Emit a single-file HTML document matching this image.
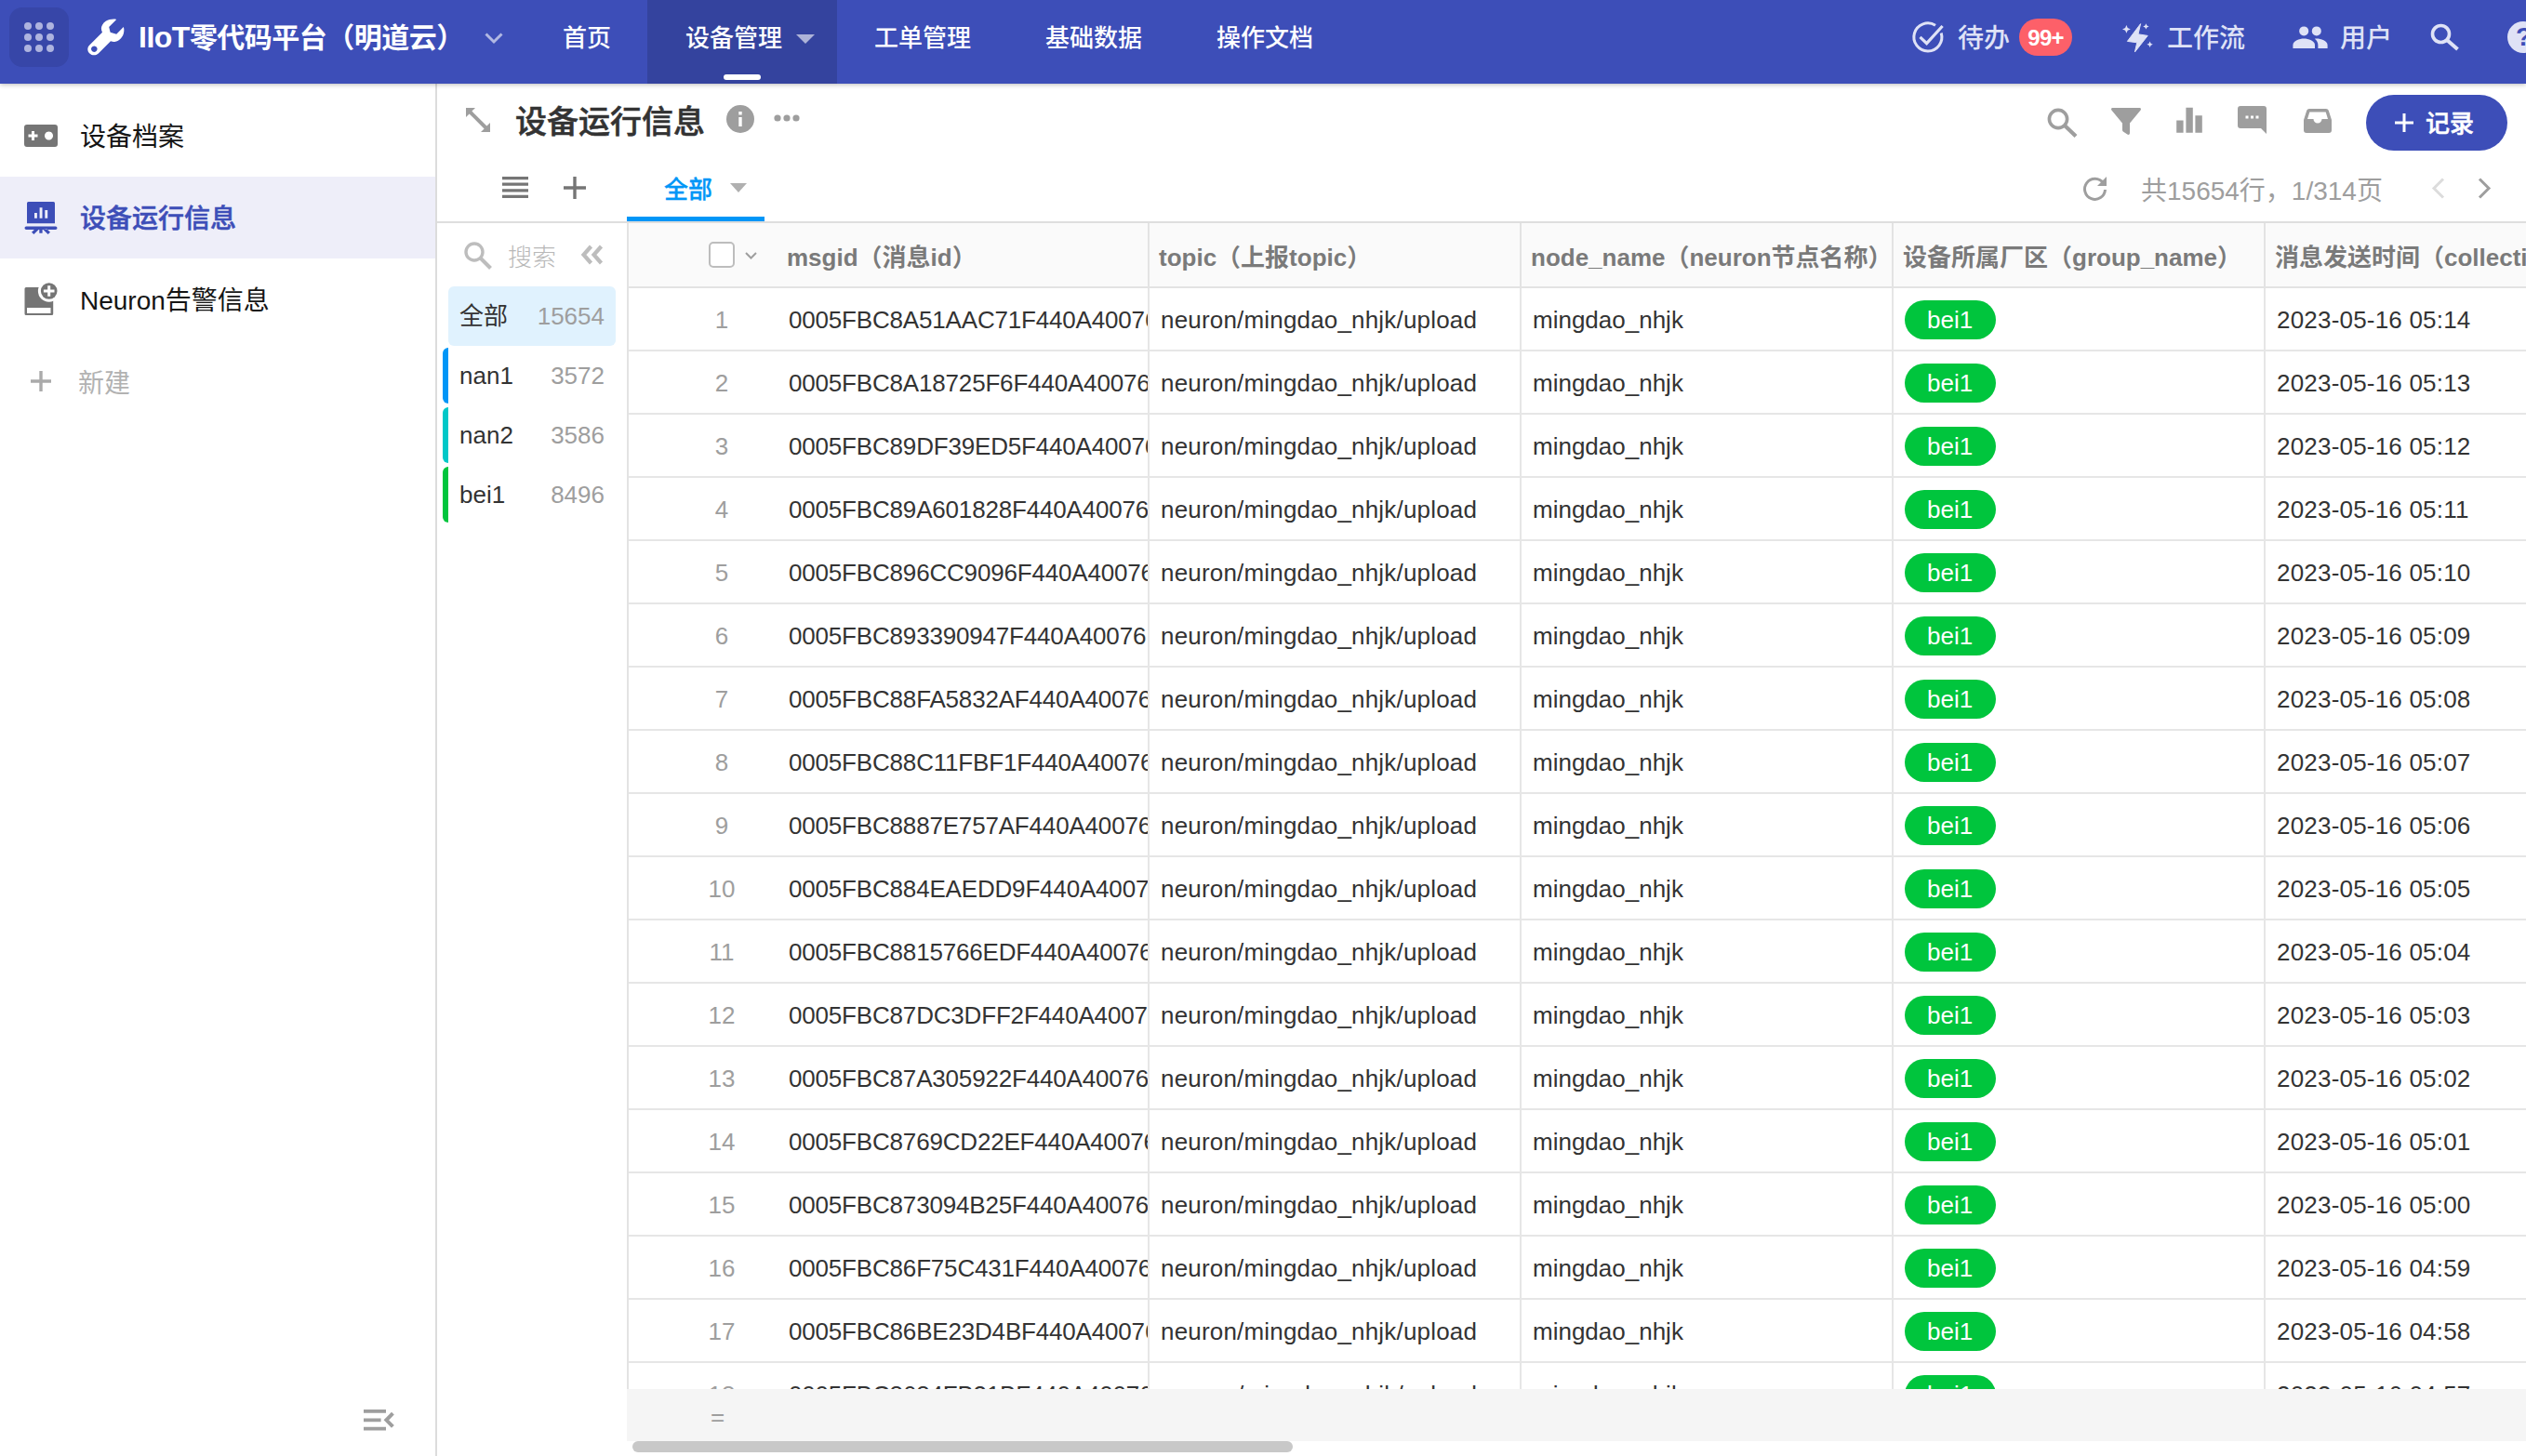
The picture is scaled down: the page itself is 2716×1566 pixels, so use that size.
<!DOCTYPE html>
<html lang="zh-CN"><head><meta charset="utf-8"><title>设备运行信息</title>
<style>
*{box-sizing:border-box;margin:0;padding:0}
html,body{width:2716px;height:1566px;overflow:hidden;background:#fff}
body{position:relative;font-family:"Liberation Sans","Noto Sans CJK SC",sans-serif;font-size:26px;color:#333;line-height:1}
.abs{position:absolute}
svg{position:absolute;display:block;overflow:visible}
/* top bar */
.topbar{position:absolute;left:0;top:0;width:2716px;height:90px;background:#3d4eb8;box-shadow:0 1px 5px rgba(0,0,0,.28);z-index:5}
.appbtn{position:absolute;left:10px;top:8px;width:64px;height:64px;border-radius:14px;background:#3746a8}
.appbtn i{position:absolute;width:8px;height:8px;border-radius:50%;background:#aeb4df}
.apptitle{position:absolute;left:149px;top:20px;height:40px;line-height:40px;font-size:30px;font-weight:700;color:#fff;white-space:nowrap;letter-spacing:-.5px}
.nav{position:absolute;top:0;height:90px;line-height:82px;font-size:26px;font-weight:500;color:#fff;white-space:nowrap}
.navact{position:absolute;left:696px;top:0;width:204px;height:90px;background:#34439e}
.navind{position:absolute;left:778px;top:80px;width:40px;height:6px;border-radius:3px;background:#fff}
.tr-tri{position:absolute;width:0;height:0;border-left:10px solid transparent;border-right:10px solid transparent;border-top:10px solid rgba(255,255,255,.6)}
.rnav{position:absolute;top:22px;height:40px;line-height:40px;font-size:28px;font-weight:500;color:#dfe2f6;white-space:nowrap}
.badge{position:absolute;left:2171px;top:20px;width:57px;height:40px;border-radius:20px;background:#fd6069;color:#fff;font-size:24px;font-weight:700;line-height:42px;text-align:center;letter-spacing:-.8px}
/* sidebar */
.sidebar{position:absolute;left:0;top:90px;width:470px;height:1476px;background:#fff;border-right:2px solid #dcdcdc}
.sitem{position:absolute;left:0;width:468px;height:88px;line-height:92px;font-size:28px;color:#151515;padding-left:86px;white-space:nowrap}
.sitem.act{background:#eeeef9;color:#3d4eb8;font-weight:500;-webkit-text-stroke:.5px #3d4eb8}
.snew{position:absolute;left:84px;top:276px;height:88px;line-height:94px;font-size:28px;color:#b2b2b2}
/* content header */
.ptitle{position:absolute;left:554px;top:105px;height:52px;line-height:52px;font-size:34px;font-weight:500;-webkit-text-stroke:.55px #333;color:#333;white-space:nowrap}
.addbtn{position:absolute;left:2544px;top:102px;width:152px;height:60px;border-radius:30px;background:#3d4eb8;color:#fff;font-size:26px;font-weight:500;-webkit-text-stroke:.5px #fff;line-height:60px;white-space:nowrap}
.addbtn span{position:absolute;left:64px;top:1px}
.tabtxt{position:absolute;left:714px;top:184px;height:40px;line-height:40px;font-size:26px;font-weight:500;-webkit-text-stroke:.3px #0096f7;color:#0096f7;white-space:nowrap}
.tabline{position:absolute;left:674px;top:233px;width:148px;height:5px;background:#0096f7;z-index:2}
.hline{position:absolute;left:470px;top:238px;width:2246px;height:2px;background:#dedede}
.pager{position:absolute;left:2302px;top:186px;height:40px;line-height:40px;font-size:28px;color:#9e9e9e;white-space:nowrap}
/* filter panel */
.fsearch{position:absolute;left:546px;top:257px;height:40px;line-height:40px;font-size:26px;font-weight:300;color:#b8b8b8}
.fitem{position:absolute;left:482px;width:180px;height:64px;line-height:64px;font-size:26px;color:#333;white-space:nowrap}
.fitem b{font-weight:400;position:absolute;left:12px}
.fitem em{font-style:normal;position:absolute;right:12px;color:#9e9e9e}
.fitem.act{background:#e0f2fe;border-radius:6px}
.fbar{position:absolute;left:476px;width:6px;height:60px;border-radius:6px 0 0 6px}
/* table */
.thead{position:absolute;left:674px;top:240px;width:2042px;height:70px;background:#fafafa;border-bottom:2px solid #e3e3e3;border-left:2px solid #e3e3e3}
.th{position:absolute;top:0;height:68px;line-height:74px;font-size:26px;font-weight:700;color:#7a7a7a;white-space:nowrap;overflow:hidden;border-right:2px solid #e3e3e3;padding-left:10px}
.tbody{position:absolute;left:674px;top:310px;width:2042px;height:1184px;overflow:hidden;border-left:2px solid #e3e3e3}
.tr{position:absolute;left:0;width:2040px;height:68px;border-bottom:2px solid #e6e6e6}
.c{position:absolute;top:0;height:66px;line-height:68px;font-size:26px;color:#333;white-space:nowrap;overflow:hidden;border-right:2px solid #e6e6e6;padding-left:12px}
.c0{left:0;width:560px;padding-left:0}
.c1{left:560px;width:400px;letter-spacing:.18px}
.c2{left:960px;width:400px}
.c3{left:1360px;width:400px}
.c4{left:1760px;width:400px;border-right:0;letter-spacing:.2px}
.no{position:absolute;left:60px;width:80px;text-align:center;color:#9e9e9e}
.mid{position:absolute;left:172px;letter-spacing:-.18px}
.tag{display:inline-block;height:42px;line-height:42px;border-radius:21px;background:#00c53d;color:#fff;padding:0 25px 0 24px;margin-top:13px;vertical-align:top;font-size:26px}
.tfoot{position:absolute;left:674px;top:1494px;width:2042px;height:56px;background:#f5f5f5}
.eq{position:absolute;left:90px;top:17px;font-size:26px;color:#9e9e9e;line-height:26px}
.hscroll{position:absolute;left:674px;top:1550px;width:2042px;height:16px;background:#fff}
.thumb{position:absolute;left:6px;top:0px;width:710px;height:12px;border-radius:6px;background:#c8c8c8}

</style></head><body>
<div class="topbar">
<div class="appbtn"><i style="left:16px;top:16px"></i><i style="left:28px;top:16px"></i><i style="left:40px;top:16px"></i><i style="left:16px;top:28px"></i><i style="left:28px;top:28px"></i><i style="left:40px;top:28px"></i><i style="left:16px;top:40px"></i><i style="left:28px;top:40px"></i><i style="left:40px;top:40px"></i></div>
<svg style="left:94px;top:20px" width="40" height="40" viewBox="0 0 40 40"><path d="M31.2 0.9 C28 0.2 23 0.8 19.7 2.8 C16.5 5 14.9 8.5 14.9 10.6 C14.9 12.2 15.3 13.6 16 14.7 L2 28.7 C-0.3 31 -0.3 35 2.4 37.4 C5 40 9 40 11.8 37.4 L25 24.2 C26.3 24.8 27.8 25.1 29.2 25 C31.5 24.9 36 22.5 38.2 18 C39.5 15 39.8 11.5 38.8 9 L31.2 16.8 L24.6 14.7 L23.2 9 Z M7.3 29.4 a3.3 3.3 0 1 0 0.01 0Z" fill="#fff" fill-rule="evenodd"/></svg>
<div class="apptitle"><span style="font-size:32px">IIoT</span>零代码平台（明道云）</div>
<svg style="left:521px;top:35px" width="20" height="12" viewBox="0 0 20 12"><path d="M1.5 1.5 L10 10 L18.5 1.5" fill="none" stroke="rgba(255,255,255,.6)" stroke-width="3"/></svg>
<div class="nav" style="left:605px">首页</div>
<div class="navact"></div>
<div class="nav" style="left:737px">设备管理</div>
<div class="tr-tri" style="left:856px;top:37px"></div>
<div class="navind"></div>
<div class="nav" style="left:940px">工单管理</div>
<div class="nav" style="left:1124px">基础数据</div>
<div class="nav" style="left:1308px">操作文档</div>
<svg style="left:2055px;top:22px" width="36" height="36" viewBox="0 0 36 36"><path d="M32.2 13.5 A15 15 0 1 1 26 5.3" fill="none" stroke="#dfe2f6" stroke-width="3"/><path d="M9.5 17.8 L16.6 24.6 L33.6 6" fill="none" stroke="#dfe2f6" stroke-width="3.2"/></svg>
<div class="rnav" style="left:2105px">待办</div>
<div class="badge">99+</div>
<svg style="left:2282px;top:23px" width="34" height="34" viewBox="0 0 34 34"><path d="M19.6 2.6 L5.4 21.4 L15.8 22.8 L13.4 33 L27.2 15.4 L17 13.8 Z" fill="#dfe2f6" stroke="#dfe2f6" stroke-width="1" stroke-linejoin="round"/><path d="M4.4 4 l1.3 3.1 3.1 1.3 -3.1 1.3 -1.3 3.1 -1.3 -3.1 -3.1 -1.3 3.1 -1.3z M25.4 2.2 l1 2.2 2.2 1 -2.2 1 -1 2.2 -1 -2.2 -2.2 -1 2.2 -1z M29.6 21.6 l1 2.2 2.2 1 -2.2 1 -1 2.2 -1 -2.2 -2.2 -1 2.2 -1z" fill="#dfe2f6"/></svg>
<div class="rnav" style="left:2330px">工作流</div>
<svg style="left:2465px;top:28px" width="38" height="24" viewBox="0 0 38 24"><circle cx="12.2" cy="5.4" r="5" fill="#dfe2f6"/><circle cx="25.8" cy="5.4" r="5" fill="#dfe2f6"/><path d="M0.4 24 V20.5 C0.4 16 7.5 13.6 12.2 13.6 C16.9 13.6 24 16 24 20.5 V24 Z" fill="#dfe2f6"/><path d="M25.8 13.6 C25.2 13.6 24.5 13.65 23.8 13.75 C26 15.4 27.4 17.6 27.4 20.5 V24 H37.6 V20.5 C37.6 16 30.5 13.6 25.8 13.6Z" fill="#dfe2f6"/></svg>
<div class="rnav" style="left:2516px">用户</div>
<svg style="left:2613px;top:25px" width="32" height="30" viewBox="0 0 32 30"><circle cx="11.5" cy="11.5" r="9" fill="none" stroke="#dfe2f6" stroke-width="3.6"/><path d="M18 18 L29.5 28" stroke="#dfe2f6" stroke-width="4" fill="none"/></svg>
<div class="abs" style="left:2696px;top:23px;width:34px;height:34px;border-radius:50%;background:#dfe2f6;color:#3d4eb8;font-size:28px;font-weight:700;line-height:34px;padding-left:9px">?</div>
</div>

<div class="sidebar">
<div class="sitem" style="top:12px">设备档案</div>
<div class="sitem act" style="top:100px">设备运行信息</div>
<div class="sitem" style="top:188px">Neuron告警信息</div>
<div class="snew">新建</div>
<svg style="left:26px;top:44px" width="36" height="24" viewBox="0 0 36 24"><path d="M3 0 H33 a3 3 0 0 1 3 3 V21 a3 3 0 0 1 -3 3 H3 a3 3 0 0 1 -3 -3 V3 a3 3 0 0 1 3 -3Z M8 7 V10.5 H4.5 V13.5 H8 V17 H11 V13.5 H14.5 V10.5 H11 V7Z M26.5 7.5 a4.5 4.5 0 1 0 .01 0Z" fill="#757575" fill-rule="evenodd"/></svg>
<svg style="left:26px;top:127px" width="36" height="35" viewBox="0 0 36 35"><path d="M4.5 0 H31.5 a1.5 1.5 0 0 1 1.5 1.5 V23.2 H3 V1.5 a1.5 1.5 0 0 1 1.5 -1.5Z M11 12 V17.8 H13.9 V12Z M16.6 6.2 V17.8 H19.5 V6.2Z M22.3 9 V17.8 H25.2 V9Z" fill="#3d4eb8" fill-rule="evenodd"/><path d="M2.2 26.5 H33.8 a1.7 1.7 0 0 1 0 3.4 H2.2 a1.7 1.7 0 0 1 0 -3.4Z M16.3 29 H19.6 V33.8 H16.3Z M11.5 29.5 L15.5 29.9 L10.4 35 L8 32.8Z M24.5 29.5 L20.5 29.9 L25.6 35 L28 32.8Z" fill="#3d4eb8"/></svg>
<svg style="left:26px;top:214px" width="36" height="36" viewBox="0 0 36 36"><path d="M2 5 H31.2 V33.5 a1.5 1.5 0 0 1 -1.5 1.5 H2 a1.5 1.5 0 0 1 -1.5 -1.5 V6.5 a1.5 1.5 0 0 1 1.5 -1.5Z M3 27 V33 H28.5 V27Z" fill="#757575" fill-rule="evenodd"/><circle cx="26.7" cy="9" r="11.8" fill="#fff"/><circle cx="26.7" cy="9" r="8.8" fill="#757575"/><path d="M26.7 3.2 V14.8 M20.9 9 H32.5" stroke="#fff" stroke-width="3" fill="none"/></svg>
<svg style="left:32px;top:308px" width="24" height="24" viewBox="0 0 24 24"><path d="M12 1 V23 M1 12 H23" stroke="#aaa" stroke-width="3.4" fill="none"/></svg>
<svg style="left:391px;top:1426px" width="34" height="23" viewBox="0 0 34 23"><path d="M0 1.9 H24 M0 11.3 H18.6 M0 20.7 H24" stroke="#9e9e9e" stroke-width="3.7" fill="none"/><path d="M31.4 4.2 L24.4 11.3 L31.4 18.4" stroke="#9e9e9e" stroke-width="4" fill="none"/></svg>
</div>

<svg style="left:501px;top:116px" width="26" height="26" viewBox="0 0 26 26"><path d="M0 0 H10 L6.4 3.6 L22.4 19.6 L26 16 V26 H16 L19.6 22.4 L3.6 6.4 L0 10Z" fill="#9e9e9e"/></svg>
<div class="ptitle">设备运行信息</div>
<div class="abs" style="left:781px;top:113px;width:30px;height:30px;border-radius:50%;background:#9e9e9e"></div>
<svg style="left:781px;top:113px" width="30" height="30" viewBox="0 0 30 30"><path d="M13.3 7 H16.7 V10.4 H13.3Z M13.3 13 H16.7 V23 H13.3Z" fill="#fff"/></svg>
<svg style="left:832px;top:123px" width="28" height="8" viewBox="0 0 28 8"><circle cx="4" cy="4" r="3.6" fill="#9e9e9e"/><circle cx="14" cy="4" r="3.6" fill="#9e9e9e"/><circle cx="24" cy="4" r="3.6" fill="#9e9e9e"/></svg>
<svg style="left:2201px;top:116px" width="33" height="32" viewBox="0 0 33 32"><circle cx="12" cy="12" r="9.6" fill="none" stroke="#9e9e9e" stroke-width="3.6"/><path d="M19 19 L31 30.5" stroke="#9e9e9e" stroke-width="4.2" fill="none"/></svg>
<svg style="left:2270px;top:116px" width="32" height="29" viewBox="0 0 32 29"><path d="M1.5 0 H30.5 C31.8 0 32.4 1.4 31.6 2.4 L20 16.5 V27 C20 28.6 18.6 29.4 17.4 28.6 L12.8 25.4 C12.3 25 12 24.4 12 23.8 V16.5 L0.4 2.4 C-0.4 1.4 0.2 0 1.5 0Z" fill="#9e9e9e"/></svg>
<svg style="left:2340px;top:115px" width="28" height="28" viewBox="0 0 28 28"><path d="M0.2 14.4 H7.6 V27.7 H0.2Z M10.4 0.8 H17.8 V27.7 H10.4Z M20.4 9.3 H27.8 V27.7 H20.4Z" fill="#9e9e9e"/></svg>
<svg style="left:2406px;top:114px" width="31" height="30" viewBox="0 0 31 30"><path d="M3 0 H28 a3 3 0 0 1 3 3 V30 L25 24 H3 a3 3 0 0 1 -3 -3 V3 a3 3 0 0 1 3 -3Z M8.5 10.5 h3 v3 h-3Z M14 10.5 h3 v3 h-3Z M19.5 10.5 h3 v3 h-3Z" fill="#9e9e9e" fill-rule="evenodd"/></svg>
<svg style="left:2477px;top:117px" width="30" height="26" viewBox="0 0 30 26"><path d="M6 0 H24 C25.3 0 26.4 .8 26.8 2 L30 12 V23 a3 3 0 0 1 -3 3 H3 a3 3 0 0 1 -3 -3 V12 L3.2 2 C3.6 .8 4.7 0 6 0Z M6.3 3.5 L4 11 H10.5 a4.5 4.5 0 0 0 9 0 H26 L23.7 3.5Z" fill="#9e9e9e" fill-rule="evenodd"/></svg>
<div class="addbtn"><svg style="left:31px;top:20px" width="20" height="20" viewBox="0 0 20 20"><path d="M10 0 V20 M0 10 H20" stroke="#fff" stroke-width="3" fill="none"/></svg><span>记录</span></div>
<svg style="left:540px;top:190px" width="28" height="23" viewBox="0 0 28 23"><path d="M0 1.6 H28 M0 8.2 H28 M0 14.8 H28 M0 21.4 H28" stroke="#757575" stroke-width="3.2" fill="none"/></svg>
<svg style="left:606px;top:190px" width="24" height="24" viewBox="0 0 24 24"><path d="M12 0 V24 M0 12 H24" stroke="#757575" stroke-width="3.4" fill="none"/></svg>
<div class="tabtxt">全部</div>
<div class="abs" style="left:785px;top:197px;width:0;height:0;border-left:9px solid transparent;border-right:9px solid transparent;border-top:10px solid #b0b0b0"></div>
<div class="tabline"></div>
<div class="hline"></div>
<svg style="left:2239px;top:189px" width="27" height="27" viewBox="0 0 27 27"><path d="M22.5 8 A11 11 0 1 0 24.5 15" fill="none" stroke="#9e9e9e" stroke-width="3"/><path d="M26 1 V11 H16Z" fill="#9e9e9e"/></svg>
<div class="pager">共15654行，1/314页</div>
<svg style="left:2614px;top:191px" width="15" height="23" viewBox="0 0 15 23"><path d="M13 1.5 L3 11.5 L13 21.5" fill="none" stroke="#dcdcdc" stroke-width="3"/></svg>
<svg style="left:2664px;top:191px" width="15" height="23" viewBox="0 0 15 23"><path d="M2 1.5 L12 11.5 L2 21.5" fill="none" stroke="#9e9e9e" stroke-width="3"/></svg>
<svg style="left:499px;top:260px" width="30" height="30" viewBox="0 0 30 30"><circle cx="11" cy="11" r="9" fill="none" stroke="#bdbdbd" stroke-width="3.4"/><path d="M17.5 17.5 L28.5 28.5" stroke="#bdbdbd" stroke-width="4" fill="none"/></svg>
<div class="fsearch">搜索</div>
<svg style="left:625px;top:264px" width="24" height="20" viewBox="0 0 24 20"><path d="M10.5 1 L2.5 10 L10.5 19 M21.5 1 L13.5 10 L21.5 19" fill="none" stroke="#bdbdbd" stroke-width="4.2"/></svg>
<div class="fitem act" style="top:308px"><b>全部</b><em>15654</em></div>
<div class="fitem" style="top:372px"><b>nan1</b><em>3572</em></div>
<div class="fitem" style="top:436px"><b>nan2</b><em>3586</em></div>
<div class="fitem" style="top:500px"><b>bei1</b><em>8496</em></div>
<div class="fbar" style="top:374px;background:#0096f7"></div>
<div class="fbar" style="top:438px;background:#00c8c8"></div>
<div class="fbar" style="top:502px;background:#00c53d"></div>
<div class="thead">
<div class="th" style="left:0;width:560px;padding-left:170px">msgid（消息id）</div>
<div class="th" style="left:560px;width:400px">topic（上报topic）</div>
<div class="th" style="left:960px;width:400px">node_name（neuron节点名称）</div>
<div class="th" style="left:1360px;width:400px">设备所属厂区（group_name）</div>
<div class="th" style="left:1760px;width:400px;border-right:0">消息发送时间（collection_time）</div>
<div class="abs" style="left:86px;top:20px;width:28px;height:28px;border:2px solid #bdbdbd;border-radius:5px;background:#fff"></div>
<svg style="left:125px;top:31px" width="13" height="8" viewBox="0 0 13 8"><path d="M1 1 L6.5 6.5 L12 1" fill="none" stroke="#9e9e9e" stroke-width="2"/></svg>
</div>

<div class="tbody"><div class="tr" style="top:0px"><div class="c c0"><span class="no">1</span><span class="mid">0005FBC8A51AAC71F440A40076</span></div><div class="c c1">neuron/mingdao_nhjk/upload</div><div class="c c2">mingdao_nhjk</div><div class="c c3"><span class="tag">bei1</span></div><div class="c c4">2023-05-16 05:14</div></div>
<div class="tr" style="top:68px"><div class="c c0"><span class="no">2</span><span class="mid">0005FBC8A18725F6F440A40076</span></div><div class="c c1">neuron/mingdao_nhjk/upload</div><div class="c c2">mingdao_nhjk</div><div class="c c3"><span class="tag">bei1</span></div><div class="c c4">2023-05-16 05:13</div></div>
<div class="tr" style="top:136px"><div class="c c0"><span class="no">3</span><span class="mid">0005FBC89DF39ED5F440A40076</span></div><div class="c c1">neuron/mingdao_nhjk/upload</div><div class="c c2">mingdao_nhjk</div><div class="c c3"><span class="tag">bei1</span></div><div class="c c4">2023-05-16 05:12</div></div>
<div class="tr" style="top:204px"><div class="c c0"><span class="no">4</span><span class="mid">0005FBC89A601828F440A40076</span></div><div class="c c1">neuron/mingdao_nhjk/upload</div><div class="c c2">mingdao_nhjk</div><div class="c c3"><span class="tag">bei1</span></div><div class="c c4">2023-05-16 05:11</div></div>
<div class="tr" style="top:272px"><div class="c c0"><span class="no">5</span><span class="mid">0005FBC896CC9096F440A40076</span></div><div class="c c1">neuron/mingdao_nhjk/upload</div><div class="c c2">mingdao_nhjk</div><div class="c c3"><span class="tag">bei1</span></div><div class="c c4">2023-05-16 05:10</div></div>
<div class="tr" style="top:340px"><div class="c c0"><span class="no">6</span><span class="mid">0005FBC893390947F440A40076</span></div><div class="c c1">neuron/mingdao_nhjk/upload</div><div class="c c2">mingdao_nhjk</div><div class="c c3"><span class="tag">bei1</span></div><div class="c c4">2023-05-16 05:09</div></div>
<div class="tr" style="top:408px"><div class="c c0"><span class="no">7</span><span class="mid">0005FBC88FA5832AF440A40076</span></div><div class="c c1">neuron/mingdao_nhjk/upload</div><div class="c c2">mingdao_nhjk</div><div class="c c3"><span class="tag">bei1</span></div><div class="c c4">2023-05-16 05:08</div></div>
<div class="tr" style="top:476px"><div class="c c0"><span class="no">8</span><span class="mid">0005FBC88C11FBF1F440A40076</span></div><div class="c c1">neuron/mingdao_nhjk/upload</div><div class="c c2">mingdao_nhjk</div><div class="c c3"><span class="tag">bei1</span></div><div class="c c4">2023-05-16 05:07</div></div>
<div class="tr" style="top:544px"><div class="c c0"><span class="no">9</span><span class="mid">0005FBC8887E757AF440A40076</span></div><div class="c c1">neuron/mingdao_nhjk/upload</div><div class="c c2">mingdao_nhjk</div><div class="c c3"><span class="tag">bei1</span></div><div class="c c4">2023-05-16 05:06</div></div>
<div class="tr" style="top:612px"><div class="c c0"><span class="no">10</span><span class="mid">0005FBC884EAEDD9F440A40076</span></div><div class="c c1">neuron/mingdao_nhjk/upload</div><div class="c c2">mingdao_nhjk</div><div class="c c3"><span class="tag">bei1</span></div><div class="c c4">2023-05-16 05:05</div></div>
<div class="tr" style="top:680px"><div class="c c0"><span class="no">11</span><span class="mid">0005FBC8815766EDF440A40076</span></div><div class="c c1">neuron/mingdao_nhjk/upload</div><div class="c c2">mingdao_nhjk</div><div class="c c3"><span class="tag">bei1</span></div><div class="c c4">2023-05-16 05:04</div></div>
<div class="tr" style="top:748px"><div class="c c0"><span class="no">12</span><span class="mid">0005FBC87DC3DFF2F440A40076</span></div><div class="c c1">neuron/mingdao_nhjk/upload</div><div class="c c2">mingdao_nhjk</div><div class="c c3"><span class="tag">bei1</span></div><div class="c c4">2023-05-16 05:03</div></div>
<div class="tr" style="top:816px"><div class="c c0"><span class="no">13</span><span class="mid">0005FBC87A305922F440A40076</span></div><div class="c c1">neuron/mingdao_nhjk/upload</div><div class="c c2">mingdao_nhjk</div><div class="c c3"><span class="tag">bei1</span></div><div class="c c4">2023-05-16 05:02</div></div>
<div class="tr" style="top:884px"><div class="c c0"><span class="no">14</span><span class="mid">0005FBC8769CD22EF440A40076</span></div><div class="c c1">neuron/mingdao_nhjk/upload</div><div class="c c2">mingdao_nhjk</div><div class="c c3"><span class="tag">bei1</span></div><div class="c c4">2023-05-16 05:01</div></div>
<div class="tr" style="top:952px"><div class="c c0"><span class="no">15</span><span class="mid">0005FBC873094B25F440A40076</span></div><div class="c c1">neuron/mingdao_nhjk/upload</div><div class="c c2">mingdao_nhjk</div><div class="c c3"><span class="tag">bei1</span></div><div class="c c4">2023-05-16 05:00</div></div>
<div class="tr" style="top:1020px"><div class="c c0"><span class="no">16</span><span class="mid">0005FBC86F75C431F440A40076</span></div><div class="c c1">neuron/mingdao_nhjk/upload</div><div class="c c2">mingdao_nhjk</div><div class="c c3"><span class="tag">bei1</span></div><div class="c c4">2023-05-16 04:59</div></div>
<div class="tr" style="top:1088px"><div class="c c0"><span class="no">17</span><span class="mid">0005FBC86BE23D4BF440A40076</span></div><div class="c c1">neuron/mingdao_nhjk/upload</div><div class="c c2">mingdao_nhjk</div><div class="c c3"><span class="tag">bei1</span></div><div class="c c4">2023-05-16 04:58</div></div>
<div class="tr" style="top:1156px"><div class="c c0"><span class="no">18</span><span class="mid">0005FBC8684FB31BF440A40076</span></div><div class="c c1">neuron/mingdao_nhjk/upload</div><div class="c c2">mingdao_nhjk</div><div class="c c3"><span class="tag">bei1</span></div><div class="c c4">2023-05-16 04:57</div></div></div>
<div class="tfoot"><span class="eq">=</span></div>
<div class="hscroll"><div class="thumb"></div></div>
</body></html>
